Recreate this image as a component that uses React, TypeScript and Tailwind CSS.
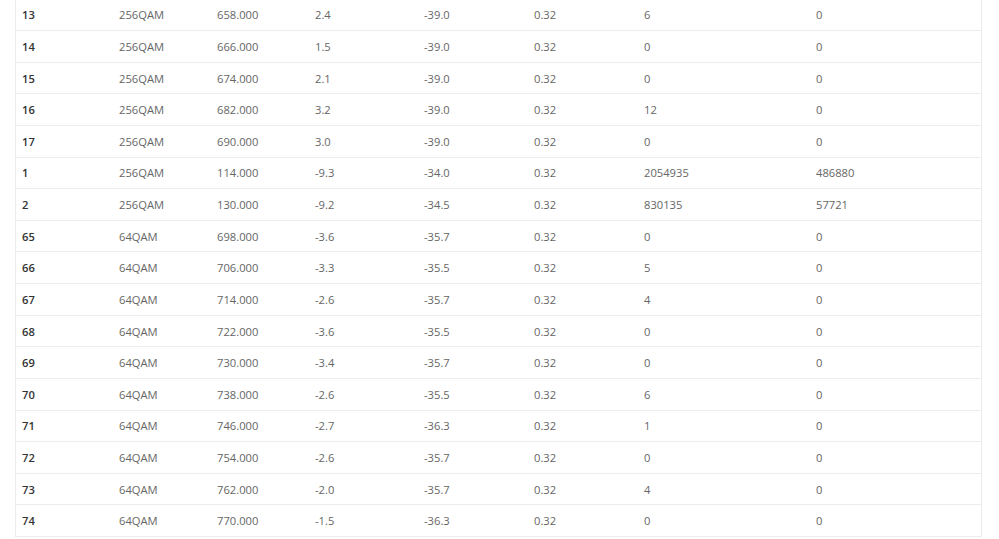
const rows: string[][] = [
  ["13", "256QAM", "658.000", "2.4", "-39.0", "0.32", "6", "0"],
  ["14", "256QAM", "666.000", "1.5", "-39.0", "0.32", "0", "0"],
  ["15", "256QAM", "674.000", "2.1", "-39.0", "0.32", "0", "0"],
  ["16", "256QAM", "682.000", "3.2", "-39.0", "0.32", "12", "0"],
  ["17", "256QAM", "690.000", "3.0", "-39.0", "0.32", "0", "0"],
  ["1", "256QAM", "114.000", "-9.3", "-34.0", "0.32", "2054935", "486880"],
  ["2", "256QAM", "130.000", "-9.2", "-34.5", "0.32", "830135", "57721"],
  ["65", "64QAM", "698.000", "-3.6", "-35.7", "0.32", "0", "0"],
  ["66", "64QAM", "706.000", "-3.3", "-35.5", "0.32", "5", "0"],
  ["67", "64QAM", "714.000", "-2.6", "-35.7", "0.32", "4", "0"],
  ["68", "64QAM", "722.000", "-3.6", "-35.5", "0.32", "0", "0"],
  ["69", "64QAM", "730.000", "-3.4", "-35.7", "0.32", "0", "0"],
  ["70", "64QAM", "738.000", "-2.6", "-35.5", "0.32", "6", "0"],
  ["71", "64QAM", "746.000", "-2.7", "-36.3", "0.32", "1", "0"],
  ["72", "64QAM", "754.000", "-2.6", "-35.7", "0.32", "0", "0"],
  ["73", "64QAM", "762.000", "-2.0", "-35.7", "0.32", "4", "0"],
  ["74", "64QAM", "770.000", "-1.5", "-36.3", "0.32", "0", "0"],
];

export default function App() {
  return (
    <div className="w-[999px] h-[539px] overflow-hidden bg-white font-['Open_Sans',sans-serif] text-[11.2px]">
      <div className="ml-[15px] mt-[-0.6px] w-[967px] border-x border-[#ececec]">
        {rows.map((r, i) => (
          <div
            key={i}
            className="grid grid-cols-[97px_98px_98px_109px_110px_110px_172px_171px] h-[31.625px] items-center border-b border-[#ececec]"
          >
            {r.map((c, j) => (
              <div
                key={j}
                className={
                  j === 0
                    ? "pl-[6px] pt-[2px] font-semibold text-[#333]"
                    : "pl-[6px] pt-[2px] text-[#666]"
                }
              >
                {c}
              </div>
            ))}
          </div>
        ))}
      </div>
    </div>
  );
}
